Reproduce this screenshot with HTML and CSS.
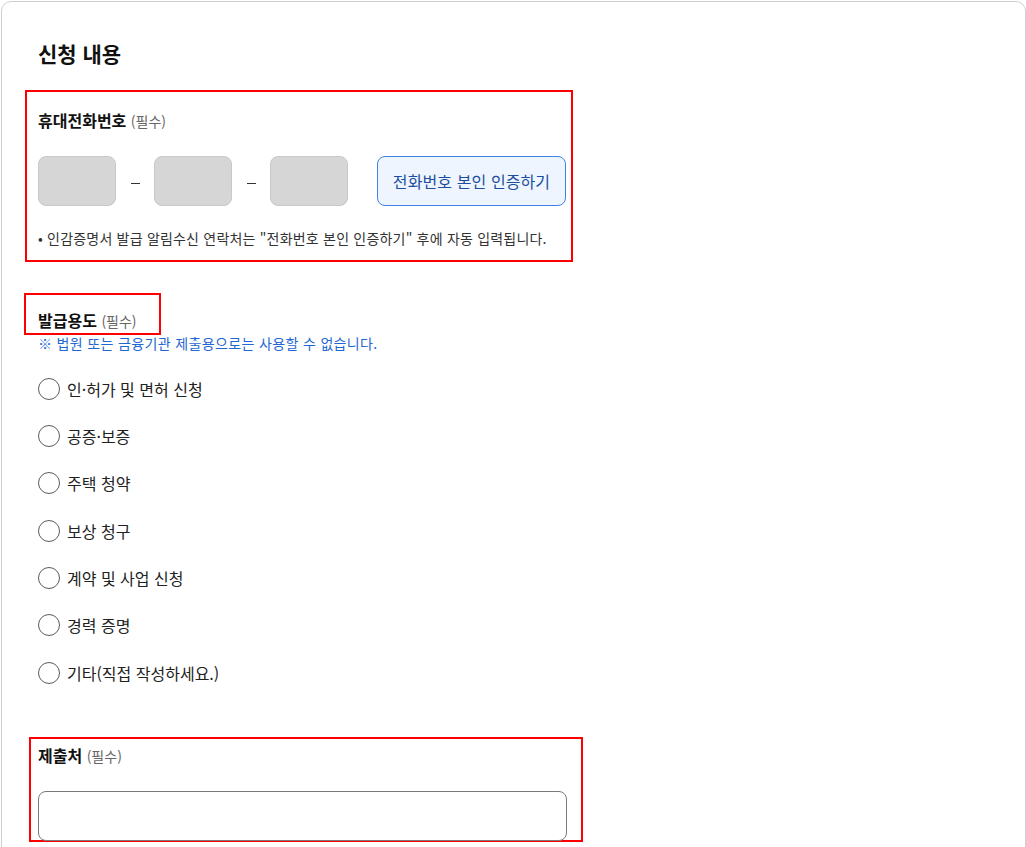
FILE: index.html
```html
<!DOCTYPE html>
<html lang="ko">
<head>
<meta charset="utf-8">
<title>신청 내용</title>
<link rel="stylesheet" href="styles.css">
</head>
<body>
<div class="card">
  <h2 class="title">신청 내용</h2>

  <section class="box box-phone">
    <div class="label">휴대전화번호 <span class="req">(필수)</span></div>
    <div class="phone-row">
      <input class="phone-input" type="text" disabled>
      <span class="dash"></span>
      <input class="phone-input" type="text" disabled>
      <span class="dash"></span>
      <input class="phone-input" type="text" disabled>
      <button class="verify-btn" type="button">전화번호 본인 인증하기</button>
    </div>
    <p class="helper">• 인감증명서 발급 알림수신 연락처는 "전화번호 본인 인증하기" 후에 자동 입력됩니다.</p>
  </section>

  <section class="purpose">
    <div class="box box-purpose">
      <div class="label">발급용도 <span class="req">(필수)</span></div>
    </div>
    <p class="note">※ 법원 또는 금융기관 제출용으로는 사용할 수 없습니다.</p>
    <ul class="radio-list">
      <li class="radio-item"><span class="radio"></span>인·허가 및 면허 신청</li>
      <li class="radio-item"><span class="radio"></span>공증·보증</li>
      <li class="radio-item"><span class="radio"></span>주택 청약</li>
      <li class="radio-item"><span class="radio"></span>보상 청구</li>
      <li class="radio-item"><span class="radio"></span>계약 및 사업 신청</li>
      <li class="radio-item"><span class="radio"></span>경력 증명</li>
      <li class="radio-item"><span class="radio"></span>기타(직접 작성하세요.)</li>
    </ul>
  </section>

  <section class="box box-submit">
    <div class="label">제출처 <span class="req">(필수)</span></div>
    <input class="text-input" type="text">
  </section>
</div>
</body>
</html>
```

FILE: styles.css
```css
* { box-sizing: border-box; }

html, body {
  margin: 0;
  padding: 0;
  background: #fff;
  overflow: hidden;
}

body {
  padding: 1px 0 0 1px;
  font-family: "Noto Sans CJK KR", "Noto Sans", sans-serif;
  color: #222;
}

.card {
  border: 1px solid #cfcfcf;
  border-radius: 10px;
  padding: 36px 0 40px 23px;
  min-height: 900px;
}

.title {
  margin: 0;
  padding-left: 13px;
  font-size: 21px;
  line-height: 30px;
  font-weight: 700;
  color: #111;
}

.box {
  border: 2px solid #ff0000;
}

.label {
  font-size: 16px;
  line-height: 22px;
  font-weight: 700;
  color: #111;
  white-space: nowrap;
}

.req {
  font-size: 14px;
  font-weight: 400;
  color: #666;
}

/* phone section */
.box-phone {
  margin-top: 22px;
  width: 548px;
  height: 172px;
  padding: 17px 0 0 11px;
}

.phone-row {
  display: flex;
  align-items: center;
  margin-top: 24px;
  height: 50px;
}

.phone-input {
  width: 78px;
  height: 50px;
  margin: 0;
  background: #d6d6d6;
  border: 1px solid #c9c9c9;
  border-radius: 8px;
}

.dash {
  width: 38px;
  display: flex;
  justify-content: center;
}

.dash::before {
  content: "";
  display: block;
  width: 9px;
  height: 1px;
  background: #333;
  margin-top: 4px;
}

.verify-btn {
  margin-left: 29px;
  width: 189px;
  height: 50px;
  background: #eef5ff;
  border: 1px solid #3f82e6;
  border-radius: 8px;
  font-family: inherit;
  font-size: 16px;
  letter-spacing: 0.1px;
  color: #1c4d9e;
  padding: 0;
}

.helper {
  margin: 22px 0 0;
  font-size: 14px;
  line-height: 20px;
  letter-spacing: 0.2px;
  color: #333;
  white-space: nowrap;
}

/* purpose section */
.purpose {
  margin-top: 31px;
}

.box-purpose {
  display: inline-block;
  margin-left: -1px;
  width: 137px;
  height: 42px;
  padding: 14px 0 0 12px;
}

.note {
  margin: 0;
  padding-left: 13px;
  font-size: 14px;
  line-height: 16px;
  letter-spacing: 0.35px;
  color: #1f67d2;
  white-space: nowrap;
}

.radio-list {
  list-style: none;
  margin: 14px 0 0;
  padding: 0 0 0 13px;
}

.radio-item {
  display: flex;
  align-items: center;
  height: 47.33px;
  font-size: 16px;
  color: #222;
}

.radio {
  width: 22px;
  height: 22px;
  border: 1px solid #5c5c5c;
  border-radius: 50%;
  margin-right: 7px;
  flex: none;
}

/* submit section */
.box-submit {
  margin-top: 41px;
  margin-left: 4px;
  width: 554px;
  height: 105px;
  padding: 5px 0 0 7px;
}

.text-input {
  display: block;
  margin-top: 24px;
  width: 529px;
  height: 50px;
  border: 1px solid #7a7a7a;
  border-radius: 8px;
  background: #fff;
}
```
